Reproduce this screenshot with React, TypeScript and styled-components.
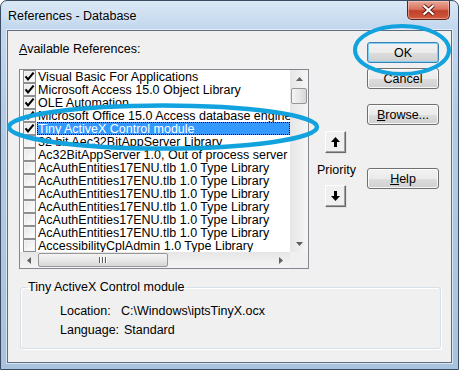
import styled, { createGlobalStyle } from 'styled-components';

const FONT = `'Liberation Sans', Arial, sans-serif`;
const SIZE = '12.5px';

const GlobalStyle = createGlobalStyle`
  html, body { margin: 0; padding: 0; background: #ffffff; }
  body { font-family: ${FONT}; font-size: ${SIZE}; color: #000; }
  * { box-sizing: border-box; }
`;

type Ref = { name: string; checked?: boolean; selected?: boolean };

const REFS: Ref[] = [
	{ name: 'Visual Basic For Applications', checked: true },
	{ name: 'Microsoft Access 15.0 Object Library', checked: true },
	{ name: 'OLE Automation', checked: true },
	{ name: 'Microsoft Office 15.0 Access database engine Object Library', checked: true },
	{ name: 'Tiny ActiveX Control module', checked: true, selected: true },
	{ name: '32 bit Aec32BitAppServer Library' },
	{ name: 'Ac32BitAppServer 1.0, Out of process server for 32-bit components' },
	{ name: 'AcAuthEntities17ENU.tlb 1.0 Type Library' },
	{ name: 'AcAuthEntities17ENU.tlb 1.0 Type Library' },
	{ name: 'AcAuthEntities17ENU.tlb 1.0 Type Library' },
	{ name: 'AcAuthEntities17ENU.tlb 1.0 Type Library' },
	{ name: 'AcAuthEntities17ENU.tlb 1.0 Type Library' },
	{ name: 'AcAuthEntities17ENU.tlb 1.0 Type Library' },
	{ name: 'AccessibilityCplAdmin 1.0 Type Library' },
];

const CheckMark = () => (
	<svg width="11" height="11" viewBox="0 0 11 11">
		<path d="M1.5 5.3 L4 8.3 L9.6 1.6" fill="none" stroke="#000" strokeWidth="2.1" />
	</svg>
);

const Arrow = ({ down }: { down?: boolean }) => (
	<svg width="9" height="10" viewBox="0 0 9 10" style={{ transform: down ? 'rotate(180deg)' : undefined }}>
		<polygon points="4.5,0 9,5 0,5" fill="#000" />
		<rect x="3" y="5" width="3" height="5" fill="#000" />
	</svg>
);

const Tri = ({ dir }: { dir: 'up' | 'down' | 'left' | 'right' }) => {
	const pts = {
		up: '0,4 7,4 3.5,0',
		down: '0,0 7,0 3.5,4',
		left: '4,0 4,7 0,3.5',
		right: '0,0 0,7 4,3.5',
	}[dir];
	const w = dir === 'up' || dir === 'down' ? 7 : 4;
	const h = dir === 'up' || dir === 'down' ? 4 : 7;
	return (
		<svg width={w} height={h} viewBox={`0 0 ${w} ${h}`}>
			<polygon points={pts} fill="#606060" />
		</svg>
	);
};

const App = () => {
	return (
		<>
			<GlobalStyle />
			<Window>
				<TitleBar>
					<TitleText>References - Database</TitleText>
					<CloseButton>
						<svg width="15" height="12" viewBox="0 0 15 12">
							<path d="M2.5 1.5 L12.5 10.5 M12.5 1.5 L2.5 10.5" stroke="#5a1a10" strokeWidth="4" />
							<path d="M2.5 1.5 L12.5 10.5 M12.5 1.5 L2.5 10.5" stroke="#ffffff" strokeWidth="2.2" />
						</svg>
					</CloseButton>
				</TitleBar>
				<Client>
					<TopSection>
						<ListColumn>
							<FieldLabel>
								<u>A</u>vailable References:
							</FieldLabel>
							<ListBox>
								<Rows>
									{REFS.map((r, i) => (
										<Row key={i}>
											<CheckBox>{r.checked && <CheckMark />}</CheckBox>
											<RowText $selected={r.selected}>{r.name}</RowText>
										</Row>
									))}
								</Rows>
								<VScroll>
									<ScrollArrow $h={17}>
										<Tri dir="up" />
									</ScrollArrow>
									<VThumb />
									<VTrack />
									<ScrollArrow $h={17}>
										<Tri dir="down" />
									</ScrollArrow>
								</VScroll>
								<HScroll>
									<HArrow>
										<Tri dir="left" />
									</HArrow>
									<HThumb>
										<Grip />
										<Grip />
										<Grip />
									</HThumb>
									<HTrack />
									<HArrow>
										<Tri dir="right" />
									</HArrow>
								</HScroll>
								<Corner />
							</ListBox>
						</ListColumn>
						<PriorityColumn>
							<SquareButton $mt={89}>
								<Arrow />
							</SquareButton>
							<PriorityLabel>Priority</PriorityLabel>
							<SquareButton $mt={8}>
								<Arrow down />
							</SquareButton>
						</PriorityColumn>
						<ButtonColumn>
							<Button $mt={0} $default>
								OK
							</Button>
							<Button $mt={5}>Cancel</Button>
							<Button $mt={15}>
								<u>B</u>rowse...
							</Button>
							<Button $mt={43}>
								<u>H</u>elp
							</Button>
						</ButtonColumn>
					</TopSection>
					<GroupBox>
						<Legend>Tiny ActiveX Control module</Legend>
						<InfoRow $mt={10}>
							<InfoLabel $w={61}>Location:</InfoLabel>
							<span>C:\Windows\iptsTinyX.ocx</span>
						</InfoRow>
						<InfoRow $mt={5}>
							<InfoLabel $w={64}>Language:</InfoLabel>
							<span>Standard</span>
						</InfoRow>
					</GroupBox>
				</Client>
				<Annotations width="459" height="370" viewBox="0 0 459 370">
					<ellipse cx="402" cy="50" rx="47" ry="24" fill="none" stroke="#12a2de" strokeWidth="4" />
					<ellipse cx="163" cy="127" rx="154" ry="21.5" fill="none" stroke="#12a2de" strokeWidth="4.5" />
				</Annotations>
			</Window>
		</>
	);
};
export default App;

const Window = styled.div`
	position: relative;
	width: 459px;
	height: 370px;
	border: 1px solid #3a4c62;
	border-radius: 7px 7px 0 0;
	background: linear-gradient(180deg, #dbe8f5 0%, #c3d8ee 7%, #b3cce6 30%, #a9c3df 100%);
	display: flex;
	flex-direction: column;
	overflow: hidden;
`;

const TitleBar = styled.div`
	height: 29px;
	display: flex;
	align-items: flex-start;
	justify-content: space-between;
	padding: 0 8px 0 7px;
`;

const TitleText = styled.div`
	line-height: 30px;
	color: #000;
	text-shadow: 0 0 6px rgba(255, 255, 255, 0.9);
`;

const CloseButton = styled.div`
	width: 43px;
	height: 19px;
	display: flex;
	align-items: center;
	justify-content: center;
	border: 1px solid #5b2418;
	border-top: none;
	border-radius: 0 0 5px 5px;
	background: linear-gradient(180deg, #e9a99a 0%, #d8755f 45%, #c2402a 55%, #cf5a3e 100%);
	box-shadow: inset 0 0 0 1px rgba(255, 210, 200, 0.5);
`;

const Client = styled.div`
	flex: 1;
	margin: 0 6px 6px 6px;
	background: #f0f0f0;
	border: 1px solid #5f6e7e;
	box-shadow: 0 0 0 1px rgba(255, 255, 255, 0.55);
	display: flex;
	flex-direction: column;
`;

const TopSection = styled.div`
	display: flex;
	padding: 11px 0 0 11px;
`;

const ListColumn = styled.div`
	width: 290px;
	display: flex;
	flex-direction: column;
`;

const FieldLabel = styled.div`
	line-height: 14px;
	height: 13px;
`;

const ListBox = styled.div`
	margin-top: 14px;
	width: 290px;
	height: 200px;
	border: 1px solid #828790;
	background: #fff;
	display: grid;
	grid-template-columns: 1fr 18px;
	grid-template-rows: 1fr 16px;
	overflow: hidden;
`;

const Rows = styled.div`
	overflow: hidden;
	display: flex;
	flex-direction: column;
`;

const Row = styled.div`
	height: 13px;
	flex: none;
	display: flex;
	align-items: center;
	padding-left: 3px;
	white-space: nowrap;
`;

const CheckBox = styled.div`
	width: 13px;
	height: 13px;
	flex: none;
	border: 1px solid #8f8f8f;
	background: linear-gradient(135deg, #e6e6e6 0%, #ffffff 100%);
	box-shadow: inset 0 0 0 1px #f4f4f4;
	display: flex;
	align-items: center;
	justify-content: center;
`;

const RowText = styled.span<{ $selected?: boolean }>`
	flex: 1;
	margin-left: 1px;
	height: 13px;
	line-height: 12px;
	padding: 1px 1px 0;
	background: ${p => (p.$selected ? '#3399ff' : 'transparent')};
	color: ${p => (p.$selected ? '#ffffff' : '#000000')};
	outline: ${p => (p.$selected ? '1px dotted #000' : 'none')};
	outline-offset: -1px;
`;

const VScroll = styled.div`
	display: flex;
	flex-direction: column;
	background: linear-gradient(90deg, #e6e6e6 0%, #f5f5f5 100%);
	padding-left: 1px;
`;

const ScrollArrow = styled.div<{ $h: number }>`
	height: ${p => p.$h}px;
	display: flex;
	align-items: center;
	justify-content: center;
	flex: none;
`;

const VThumb = styled.div`
	height: 16px;
	margin: 1px 1px 0 0;
	border: 1px solid #979797;
	border-radius: 2px;
	background: linear-gradient(90deg, #f4f4f4 0%, #e8e8e8 50%, #d6d6d6 100%);
	flex: none;
`;

const VTrack = styled.div`
	flex: 1;
`;

const HScroll = styled.div`
	display: flex;
	align-items: stretch;
	background: linear-gradient(180deg, #e6e6e6 0%, #f5f5f5 100%);
	padding-top: 1px;
`;

const HArrow = styled.div`
	width: 18px;
	flex: none;
	display: flex;
	align-items: center;
	justify-content: center;
`;

const HThumb = styled.div`
	width: 130px;
	margin-bottom: 1px;
	flex: none;
	border: 1px solid #979797;
	border-radius: 2px;
	background: linear-gradient(180deg, #f4f4f4 0%, #e8e8e8 50%, #d6d6d6 100%);
	display: flex;
	align-items: center;
	justify-content: center;
	gap: 1px;
`;

const Grip = styled.div`
	width: 1px;
	height: 6px;
	background: #5e5e5e;
	box-shadow: 1px 0 0 #ffffff;
	margin-right: 1px;
`;

const HTrack = styled.div`
	flex: 1;
`;

const Corner = styled.div`
	background: #f0f0f0;
`;

const PriorityColumn = styled.div`
	width: 58px;
	display: flex;
	flex-direction: column;
	align-items: flex-start;
`;

const SquareButton = styled.div<{ $mt: number }>`
	margin-top: ${p => p.$mt}px;
	margin-left: 16px;
	width: 21px;
	height: 22px;
	display: flex;
	align-items: center;
	justify-content: center;
	background: #f0f0f0;
	border: 1px solid;
	border-color: #ffffff #696969 #696969 #ffffff;
	box-shadow: inset -1px -1px 0 #a0a0a0, 1px 1px 0 #e3e3e3;
`;

const PriorityLabel = styled.div`
	margin: 11px 0 0 8px;
	line-height: 13px;
`;

const ButtonColumn = styled.div`
	display: flex;
	flex-direction: column;
`;

const Button = styled.div<{ $mt: number; $default?: boolean }>`
	margin-top: ${p => p.$mt}px;
	width: 72px;
	height: 21px;
	display: flex;
	align-items: center;
	justify-content: center;
	border: 1px solid ${p => (p.$default ? '#3c7fb1' : '#707070')};
	border-radius: 3px;
	background: linear-gradient(180deg, #f2f2f2 0%, #ebebeb 50%, #dddddd 51%, #cfcfcf 100%);
	box-shadow: inset 0 0 0 1px ${p => (p.$default ? '#7fd2f5' : 'rgba(255,255,255,0.8)')};
	color: #000;
`;

const GroupBox = styled.fieldset`
	margin: 11px 0 0 12px;
	width: 421px;
	height: 69px;
	padding: 0 0 0 6px;
	border: 1px solid #d5dfe5;
	border-radius: 3px;
	box-shadow: inset 1px 1px 0 #ffffff, 1px 1px 0 #ffffff;
	min-width: 0;
`;

const Legend = styled.legend`
	padding: 0 1px;
	line-height: 14px;
`;

const InfoRow = styled.div<{ $mt: number }>`
	display: flex;
	margin: ${p => p.$mt}px 0 0 33px;
	line-height: 14px;
`;

const InfoLabel = styled.span<{ $w: number }>`
	width: ${p => p.$w}px;
	flex: none;
`;

const Annotations = styled.svg`
	position: absolute;
	left: -1px;
	top: -1px;
	pointer-events: none;
`;
